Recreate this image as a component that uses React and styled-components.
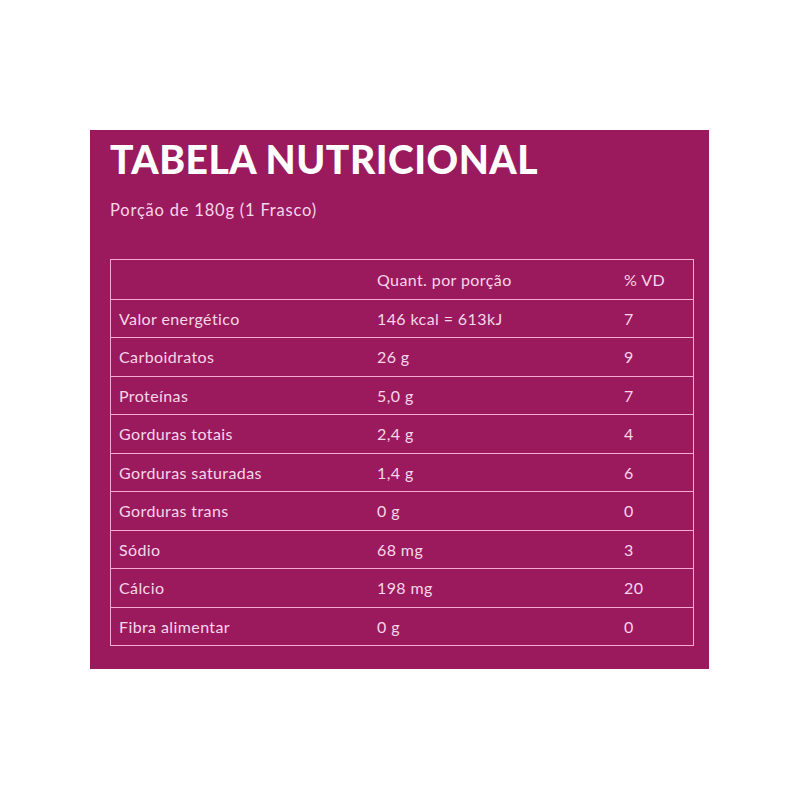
import React from "react";
import styled, { createGlobalStyle } from "styled-components";

const Global = createGlobalStyle`
  html, body { margin: 0; padding: 0; background: #ffffff; }
  body { font-family: "Lato", "Noto Sans", sans-serif; }
`;

const Page = styled.div`
  padding: 130px 0 0 90px;
`;

const Panel = styled.section`
  width: 619px;
  height: 539px;
  box-sizing: border-box;
  background: #9b1a5e;
  padding: 7px 15px 0 20px;
  display: flex;
  flex-direction: column;
`;

const Title = styled.h1`
  margin: 0;
  font-family: "Lato", sans-serif;
  font-weight: 900;
  font-size: 39px;
  line-height: 44px;
  color: #ffffff;
  letter-spacing: 0.5px;
`;

const Subtitle = styled.p`
  margin: 19px 0 0 0;
  font-size: 16.5px;
  line-height: 20px;
  letter-spacing: 0.8px;
  color: #f6d6e8;
`;

const Table = styled.div`
  margin-top: 39px;
  display: grid;
  grid-template-columns: 257px 248px 1fr;
  border: 1.5px solid #f5a9d3;
`;

const Cell = styled.div`
  height: 38.5px;
  box-sizing: border-box;
  display: flex;
  align-items: center;
  padding-left: ${(p) => p.$pad}px;
  font-size: 16px;
  letter-spacing: 0.4px;
  color: #f6d6e8;
  border-top: ${(p) => (p.$first ? "none" : "1.5px solid #f5a9d3")};
`;

const rows = [
  ["Valor energético", "146 kcal = 613kJ", "7"],
  ["Carboidratos", "26 g", "9"],
  ["Proteínas", "5,0 g", "7"],
  ["Gorduras totais", "2,4 g", "4"],
  ["Gorduras saturadas", "1,4 g", "6"],
  ["Gorduras trans", "0 g", "0"],
  ["Sódio", "68 mg", "3"],
  ["Cálcio", "198 mg", "20"],
  ["Fibra alimentar", "0 g", "0"],
];

export default function App() {
  return (
    <Page>
      <Global />
      <Panel>
        <Title>TABELA NUTRICIONAL</Title>
        <Subtitle>Porção de 180g (1 Frasco)</Subtitle>
        <Table>
          <Cell $first $pad={8}></Cell>
          <Cell $first $pad={9}>Quant. por porção</Cell>
          <Cell $first $pad={8}>% VD</Cell>
          {rows.map((r) => (
            <React.Fragment key={r[0]}>
              <Cell $pad={8}>{r[0]}</Cell>
              <Cell $pad={9}>{r[1]}</Cell>
              <Cell $pad={8}>{r[2]}</Cell>
            </React.Fragment>
          ))}
        </Table>
      </Panel>
    </Page>
  );
}
